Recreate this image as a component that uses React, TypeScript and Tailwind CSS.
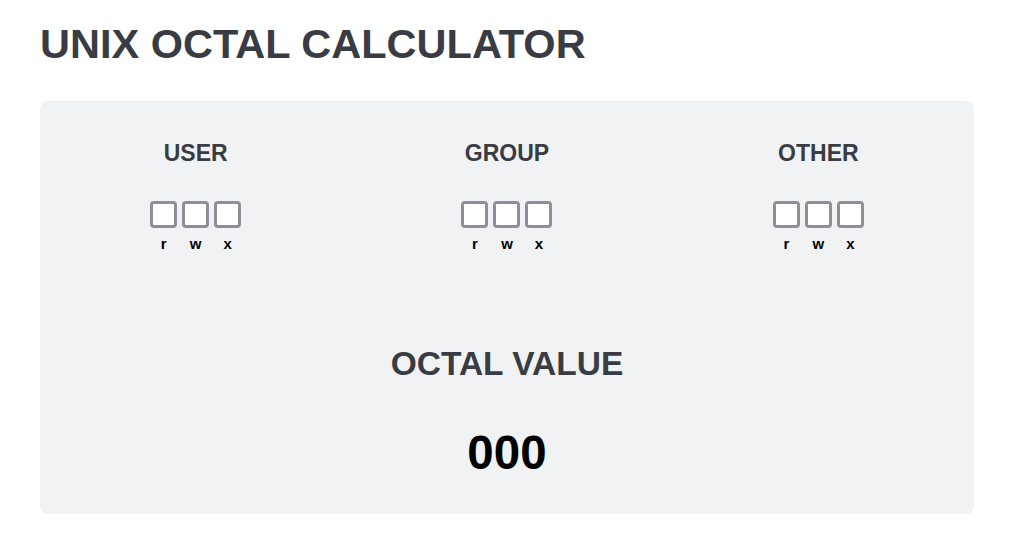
import { useState } from "react";

const groups = ["USER", "GROUP", "OTHER"];
const bits = [
  { label: "r", value: 4 },
  { label: "w", value: 2 },
  { label: "x", value: 1 },
];

function PermGroup({
  name,
  value,
  onToggle,
}: {
  name: string;
  value: number;
  onToggle: (bit: number) => void;
}) {
  return (
    <div className="flex flex-col items-center">
      <h2 className="text-[23px] leading-[28px] font-bold text-[#393c42]">{name}</h2>
      <div className="mt-[34px] flex gap-[5px]">
        {bits.map((b) => (
          <label key={b.label} className="flex flex-col items-center cursor-pointer">
            <input
              type="checkbox"
              className="sr-only"
              checked={(value & b.value) !== 0}
              onChange={() => onToggle(b.value)}
            />
            <span
              className={`w-[27px] h-[27px] rounded-[4px] border-[3px] border-[#8f8d99] ${
                (value & b.value) !== 0 ? "bg-[#8f8d99]" : "bg-white"
              }`}
            />
            <span className="mt-[8px] text-[15px] leading-[16px] font-bold text-black">{b.label}</span>
          </label>
        ))}
      </div>
    </div>
  );
}

export default function App() {
  const [perms, setPerms] = useState([0, 0, 0]);

  const toggle = (idx: number, bit: number) =>
    setPerms((p) => p.map((v, i) => (i === idx ? v ^ bit : v)));

  return (
    <div className="min-h-screen bg-white px-10 pt-5 font-['Liberation_Sans',Arial,sans-serif]">
      <h1 className="text-[41.5px] leading-[48px] font-bold text-[#393c42]">UNIX OCTAL CALCULATOR</h1>

      <div className="mt-[33px] w-[934px] rounded-lg bg-[#f1f2f4] pt-[38px] pb-[33px]">
        <div className="grid grid-cols-3">
          {groups.map((g, i) => (
            <PermGroup key={g} name={g} value={perms[i]} onToggle={(bit) => toggle(i, bit)} />
          ))}
        </div>

        <div className="mt-[92px] flex flex-col items-center">
          <h2 className="text-[33.5px] leading-[40px] font-bold text-[#393c42]">OCTAL VALUE</h2>
          <div className="mt-[41px] text-[47.5px] leading-[56px] font-bold text-black">
            {perms.join("")}
          </div>
        </div>
      </div>
    </div>
  );
}
